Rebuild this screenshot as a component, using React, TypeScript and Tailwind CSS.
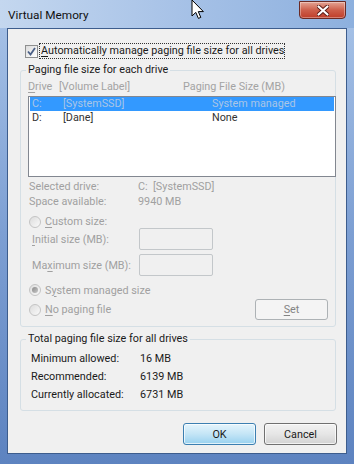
import React from 'react';

const Key: React.FC<{ children: React.ReactNode }> = ({ children }) => (
  <span className="underline decoration-1 underline-offset-[2px]">{children}</span>
);

const Radio: React.FC<{ checked?: boolean }> = ({ checked }) => (
  <span className="w-[12px] h-[12px] shrink-0 rounded-full border border-[#c4c4c4] bg-gradient-to-br from-[#dcdcdc] to-[#fafafa] flex items-center justify-center">
    {checked && (
      <span className="w-[6px] h-[6px] rounded-full bg-gradient-to-br from-[#8a8a8a] to-[#c8c8c8]" />
    )}
  </span>
);

const TextBox: React.FC = () => (
  <div className="w-[74px] h-[22px] rounded-[2px] border border-[#c3c7ca] bg-[#f0f0f0]" />
);

const GroupBox: React.FC<{ title: string; className?: string; children: React.ReactNode }> = ({
  title,
  className,
  children,
}) => (
  <fieldset
    className={`min-w-0 w-[316px] ml-[12px] rounded-[3px] border border-[#d5dfe5] ${className ?? ''}`}
  >
    <legend className="ml-[5px] px-[2px] h-[16px] leading-[16px] text-[#1a1a1a]">{title}</legend>
    {children}
  </fieldset>
);

export default function App() {
  return (
    <div className="relative w-[354px] h-[464px] overflow-hidden flex flex-col whitespace-nowrap bg-gradient-to-b from-[#a9c4e8] via-[#7d9fd3] to-[#5d83c0] font-['Roboto',sans-serif] text-[10.8px] leading-[15px] text-[#1a1a1a]">
      {/* title bar */}
      <div className="h-[28px] flex items-start justify-between pl-[8px] pr-[8px] bg-gradient-to-r from-[#c4d7ef] via-[#a7c2e7] to-[#8db0de]">
        <span className="mt-[7px] text-[11.8px] leading-[16px] text-[#111]">Virtual Memory</span>
        <div className="mt-[1px] w-[47px] h-[18px] rounded-b-[4px] border border-[#6b2a24] bg-gradient-to-b from-[#e3a394] via-[#cd5f4b] to-[#bf3c28] flex items-center justify-center shadow-[inset_0_0_0_1px_rgba(255,255,255,0.35)]">
          <svg width="12" height="11" viewBox="0 0 12 11">
            <path
              d="M1.5 1.5 L10.5 9.5 M10.5 1.5 L1.5 9.5"
              stroke="#5a1a14"
              strokeWidth="4"
              strokeLinecap="round"
            />
            <path
              d="M1.5 1.5 L10.5 9.5 M10.5 1.5 L1.5 9.5"
              stroke="#ffffff"
              strokeWidth="2.2"
              strokeLinecap="round"
            />
          </svg>
        </div>
      </div>

      {/* client area */}
      <div className="ml-[7px] w-[340px] h-[426px] border border-[#3d5d8d] bg-[#f0f0f0] flex flex-col">
        {/* auto manage checkbox */}
        <div className="mt-[14px] ml-[17px] h-[16px] flex items-center">
          <span className="w-[13px] h-[13px] shrink-0 border border-[#8e8f8f] bg-gradient-to-br from-[#dcdcdc] to-[#ffffff] flex items-center justify-center">
            <svg width="9" height="9" viewBox="0 0 9 9">
              <path d="M1 4.5 L3.5 7.5 L8 1" fill="none" stroke="#4a5f86" strokeWidth="1.8" />
            </svg>
          </span>
          <span className="ml-[1px] pl-[2px] pr-[1px] h-[16px] leading-[16px] outline-1 outline-dotted outline-[#333] -outline-offset-1">
            <Key>A</Key>utomatically manage paging file size for all drives
          </span>
        </div>

        {/* Paging file size for each drive */}
        <GroupBox title="Paging file size for each drive" className="mt-[3px]">
          <div className="pl-[7px] pb-[6px] flex flex-col">
            <div className="mt-[1px] h-[15px] flex text-[#a3a3a3]">
              <span className="w-[31px]">
                <Key>D</Key>rive
              </span>
              <span className="w-[124px]">[Volume Label]</span>
              <span>Paging File Size (MB)</span>
            </div>

            <div className="mt-[2px] w-[308px] h-[81px] border border-[#828790] bg-white px-[1px] py-0">
              <div className="h-[14px] leading-[14px] pl-[2px] flex bg-[#3399ff] text-[#aac5e6]">
                <span className="w-[31px]">C:</span>
                <span className="w-[149px]">[SystemSSD]</span>
                <span>System managed</span>
              </div>
              <div className="h-[14px] leading-[14px] pl-[2px] flex text-[#333]">
                <span className="w-[31px]">D:</span>
                <span className="w-[149px]">[Dane]</span>
                <span>None</span>
              </div>
            </div>

            <div className="mt-[2px] text-[#a0a0a0]">
              <div className="h-[15px] flex pl-[1px]">
                <span className="w-[109px]">Selected drive:</span>
                <span>C:&nbsp;&nbsp;[SystemSSD]</span>
              </div>
              <div className="h-[15px] flex pl-[1px]">
                <span className="w-[109px]">Space available:</span>
                <span>9940 MB</span>
              </div>
            </div>

            <div className="mt-[6px] h-[13px] flex items-center pl-[1px] text-[#a0a0a0]">
              <Radio />
              <span className="ml-[4px]">
                <Key>C</Key>ustom size:
              </span>
            </div>

            <div className="h-[22px] flex items-center pl-[4px] text-[#a0a0a0]">
              <span className="w-[107px]">
                <Key>I</Key>nitial size (MB):
              </span>
              <TextBox />
            </div>

            <div className="mt-[4px] h-[22px] flex items-center pl-[4px] text-[#a0a0a0]">
              <span className="w-[107px]">
                Ma<Key>x</Key>imum size (MB):
              </span>
              <TextBox />
            </div>

            <div className="mt-[7px] h-[14px] flex items-center pl-[1px] text-[#a0a0a0]">
              <Radio checked />
              <span className="ml-[4px]">
                S<Key>y</Key>stem managed size
              </span>
            </div>

            <div className="mt-[2px] h-[21px] flex items-center pl-[1px] text-[#a0a0a0]">
              <Radio />
              <span className="ml-[4px]">
                <Key>N</Key>o paging file
              </span>
              <button className="ml-auto mr-[7px] w-[73px] h-[21px] rounded-[3px] border border-[#adb2b5] bg-[#f4f4f4] text-[#838383]">
                <Key>S</Key>et
              </button>
            </div>
          </div>
        </GroupBox>

        {/* Total paging file size */}
        <GroupBox title="Total paging file size for all drives" className="mt-[4px]">
          <div className="mt-[3px] pl-[10px] pb-[6px]">
            {[
              ['Minimum allowed:', '16 MB'],
              ['Recommended:', '6139 MB'],
              ['Currently allocated:', '6731 MB'],
            ].map(([label, value]) => (
              <div key={label} className="h-[18px] leading-[18px] flex">
                <span className="w-[109px]">{label}</span>
                <span>{value}</span>
              </div>
            ))}
          </div>
        </GroupBox>

        {/* dialog buttons */}
        <div className="mt-[12px] mr-[9px] flex justify-end gap-[8px]">
          <button className="w-[73px] h-[22px] rounded-[3px] border border-[#3c7fb1] bg-gradient-to-b from-[#e5f4fc] via-[#c4e5f6] to-[#98d1ef] shadow-[inset_0_0_0_1px_rgba(255,255,255,0.7)] text-[#1a1a1a]">
            OK
          </button>
          <button className="w-[73px] h-[22px] rounded-[3px] border border-[#707070] bg-gradient-to-b from-[#f2f2f2] via-[#e6e6e6] to-[#d2d2d2] shadow-[inset_0_0_0_1px_rgba(255,255,255,0.7)] text-[#1a1a1a]">
            Cancel
          </button>
        </div>
      </div>

      {/* mouse pointer */}
      <svg className="absolute left-[191px] top-[-1px]" width="14" height="22" viewBox="0 0 14 22">
        <path
          d="M1 1 L1 17 L4.8 13.4 L7.4 19.4 L9.8 18.4 L7.3 12.6 L12.4 12.6 Z"
          fill="#ffffff"
          stroke="#000000"
          strokeWidth="1"
          strokeLinejoin="round"
        />
      </svg>
    </div>
  );
}
